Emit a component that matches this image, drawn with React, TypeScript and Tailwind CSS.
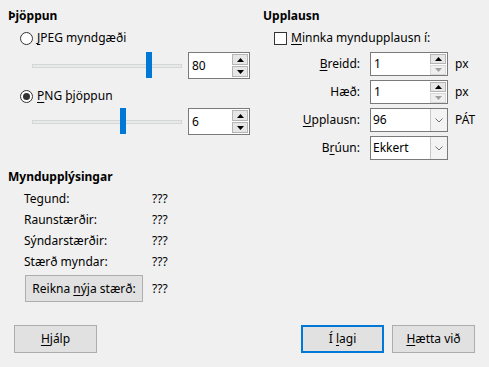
import React from "react";

const Up = ({ dim }: { dim?: boolean }) => (
  <svg width="7" height="4" viewBox="0 0 7 4"><path d="M0 4 L3.5 0 L7 4 Z" fill={dim ? "#a0a0a0" : "#000"} /></svg>
);
const Down = ({ dim }: { dim?: boolean }) => (
  <svg width="7" height="4" viewBox="0 0 7 4"><path d="M0 0 L3.5 4 L7 0 Z" fill={dim ? "#a0a0a0" : "#000"} /></svg>
);

function SpinBig({ value }: { value: string }) {
  return (
    <div className="w-[62px] h-[27px] border border-[#7a7a7a] bg-white flex items-center">
      <span className="flex-1 pl-[3px] text-[12px]">{value}</span>
      <div className="flex flex-col gap-[1px] mr-[1px]">
        <div className="w-[16px] h-[11px] border border-[#b5b5b5] bg-[#e6e6e6] flex items-center justify-center"><Up /></div>
        <div className="w-[16px] h-[11px] border border-[#b5b5b5] bg-[#e6e6e6] flex items-center justify-center"><Down /></div>
      </div>
    </div>
  );
}

function SpinSmall({ value }: { value: string }) {
  return (
    <div className="w-[78px] h-[24px] border border-[#7a7a7a] bg-white flex items-center">
      <span className="flex-1 pl-[3px] text-[12px]">{value}</span>
      <div className="flex flex-col gap-[1px] mr-[1px]">
        <div className="w-[16px] h-[10px] border border-[#b5b5b5] bg-[#e6e6e6] flex items-center justify-center"><Up /></div>
        <div className="w-[16px] h-[10px] border border-[#d8d8d8] bg-[#efefef] flex items-center justify-center"><Down dim /></div>
      </div>
    </div>
  );
}

function Combo({ value }: { value: string }) {
  return (
    <div className="w-[78px] h-[24px] border border-[#7a7a7a] bg-white flex items-center">
      <span className="flex-1 pl-[2px] text-[12px]">{value}</span>
      <div className="w-[17px] h-[22px] border-l border-[#c8c8c8] bg-[#f3f3f3] flex items-center justify-center">
        <svg width="8" height="5" viewBox="0 0 8 5"><path d="M0.5 0.5 L4 4 L7.5 0.5" stroke="#707070" fill="none" strokeWidth="1" /></svg>
      </div>
    </div>
  );
}

function Slider({ pos }: { pos: number }) {
  return (
    <div className="relative w-[150px] h-[27px] flex items-center">
      <div className="w-full h-[4px] border border-[#d6d6d6] bg-[#e7eaea]" />
      <div className="absolute top-0 w-[6px] h-[26px] bg-[#0078d7]" style={{ left: pos }} />
    </div>
  );
}

const U = ({ children }: { children: React.ReactNode }) => (
  <span className="underline underline-offset-[2px]">{children}</span>
);

function Btn({ children, w, def }: { children: React.ReactNode; w: string; def?: boolean }) {
  return (
    <div
      className={`${w} h-[28px] bg-[#e1e1e1] flex items-center justify-center text-[12px] ${
        def ? "border-2 border-[#0078d7]" : "border border-[#adadad]"
      }`}
    >
      <span>{children}</span>
    </div>
  );
}

export default function App() {
  return (
    <div
      className="w-[489px] h-[367px] bg-[#f0f0f0] text-black text-[12px] leading-[16px] flex flex-col"
      style={{ fontFamily: '"Noto Sans", "Open Sans", sans-serif' }}
    >
      <div className="flex pt-[8px]">
        {/* Left */}
        <div className="w-[255px] pl-[8px] flex flex-col">
          <div className="h-[16px] font-bold">Þjöppun</div>
          <div className="h-[16px] mt-[6px] flex items-center pl-[12px]">
            <div className="w-[13px] h-[13px] rounded-full border border-[#333] bg-white" />
            <span className="ml-[4px]"><U>J</U>PEG myndgæði</span>
          </div>
          <div className="h-[27px] mt-[6px] flex items-center pl-[24px]">
            <Slider pos={114} />
            <div className="ml-[6px]"><SpinBig value="80" /></div>
          </div>
          <div className="h-[16px] mt-[9px] flex items-center pl-[12px]">
            <div className="w-[13px] h-[13px] rounded-full border border-[#333] bg-white flex items-center justify-center">
              <div className="w-[7px] h-[7px] rounded-full bg-[#333]" />
            </div>
            <span className="ml-[4px]"><U>P</U>NG þjöppun</span>
          </div>
          <div className="h-[27px] mt-[4px] flex items-center pl-[24px]">
            <Slider pos={88} />
            <div className="ml-[6px]"><SpinBig value="6" /></div>
          </div>
        </div>
        {/* Right */}
        <div className="pl-[8px] flex flex-col">
          <div className="h-[16px] font-bold">Upplausn</div>
          <div className="h-[16px] mt-[6px] flex items-center pl-[11px]">
            <div className="w-[13px] h-[13px] border border-[#333] bg-white" />
            <span className="ml-[4px]"><U>M</U>innka myndupplausn í:</span>
          </div>
          <div className="mt-[6px] grid grid-cols-[107px_78px_auto] gap-y-[4px] items-center">
            <span className="text-right pr-[10px]"><U>B</U>reidd:</span>
            <SpinSmall value="1" />
            <span className="pl-[7px]">px</span>
            <span className="text-right pr-[10px]">Hæð:</span>
            <SpinSmall value="1" />
            <span className="pl-[7px]">px</span>
            <span className="text-right pr-[10px]"><U>U</U>pplausn:</span>
            <Combo value="96" />
            <span className="pl-[7px]">PÁT</span>
            <span className="text-right pr-[10px]">B<U>r</U>úun:</span>
            <Combo value="Ekkert" />
            <span />
          </div>
        </div>
      </div>

      {/* Info */}
      <div className="mt-[9px] pl-[8px] flex flex-col">
        <div className="h-[16px] font-bold">Myndupplýsingar</div>
        <div className="mt-[6px] pl-[16px] grid grid-cols-[128px_auto] gap-y-[5px]">
          <span>Tegund:</span><span>???</span>
          <span>Raunstærðir:</span><span>???</span>
          <span>Sýndarstærðir:</span><span>???</span>
          <span>Stærð myndar:</span><span>???</span>
        </div>
        <div className="mt-[5px] pl-[17px] flex items-center">
          <div className="w-[118px] h-[27px] border border-[#adadad] bg-[#e1e1e1] flex items-center justify-center">
            <span>Reikna <U>n</U>ýja stærð:</span>
          </div>
          <span className="ml-[9px]">???</span>
        </div>
      </div>

      <div className="flex-1" />
      <div className="flex items-center px-[14px] pb-[14px]">
        <Btn w="w-[83px]"><U>H</U>jálp</Btn>
        <div className="flex-1" />
        <Btn w="w-[83px]" def>Í <U>l</U>agi</Btn>
        <div className="w-[8px]" />
        <Btn w="w-[83px]"><U>H</U>ætta við</Btn>
      </div>
    </div>
  );
}
